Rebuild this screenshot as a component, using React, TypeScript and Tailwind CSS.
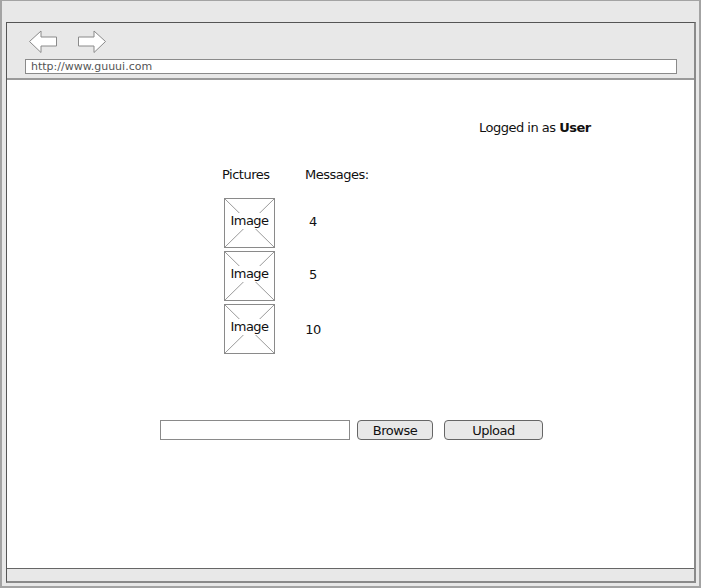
import React from 'react';

function ArrowLeft() {
  return (
    <svg width="30" height="24" viewBox="0 0 30 24" className="block">
      <polygon
        points="1.5,11.5 13,1 13,7 28.5,7 28.5,16 13,16 13,22.5"
        fill="#fff"
        stroke="#8a8a8a"
        strokeWidth="1"
      />
    </svg>
  );
}

function ArrowRight() {
  return (
    <svg width="30" height="24" viewBox="0 0 30 24" className="block">
      <polygon
        points="28.5,11.5 17,1 17,7 1.5,7 1.5,16 17,16 17,22.5"
        fill="#fff"
        stroke="#8a8a8a"
        strokeWidth="1"
      />
    </svg>
  );
}

function ImageBox() {
  return (
    <div className="relative w-[51px] h-[50px] border border-[#8a8a8a] bg-white flex items-center justify-center">
      <svg className="absolute inset-0" width="49" height="48" viewBox="0 0 49 48">
        <line x1="0" y1="0" x2="49" y2="48" stroke="#9a9a9a" strokeWidth="1" />
        <line x1="49" y1="0" x2="0" y2="48" stroke="#9a9a9a" strokeWidth="1" />
      </svg>
      <span className="relative bg-white leading-[16px] px-[1px] -mt-[4px]">Image</span>
    </div>
  );
}

const rows = [4, 5, 10];

export default function App() {
  return (
    <div
      className="w-[701px] h-[588px] bg-[#e8e8e8] border-t border-l-2 border-r-2 border-b-2 border-[#a3a3a3] text-[13px] tracking-[-0.5px] text-[#111]"
      style={{ fontFamily: '"DejaVu Sans", Verdana, sans-serif' }}
    >
      <div className="ml-[4px] mt-[21px] w-[690px] h-[561px] flex flex-col border-t border-l border-[#555] border-r-2 border-b-2 border-r-[#8a8a8a] border-b-[#8a8a8a]">
        {/* toolbar */}
        <div className="h-[57px] border-b-2 border-[#9a9a9a] bg-[#e8e8e8] flex flex-col">
          <div className="flex gap-[19px] pl-[21px] pt-[7px] h-[36px]">
            <ArrowLeft />
            <ArrowRight />
          </div>
          <div className="ml-[18px] w-[652px] h-[15px] bg-white border border-[#8a8a8a] flex items-center pl-[5px] text-[11px] tracking-normal text-[#555] leading-none">
            http://www.guuui.com
          </div>
        </div>

        {/* page */}
        <div className="flex-1 bg-white flex flex-col">
          <div className="pl-[472px] pt-[40px] leading-[16px]">
            Logged in as <span className="font-bold">User</span>
          </div>

          <div className="flex pl-[215px] mt-[31px] leading-[16px]">
            <span className="w-[83px]">Pictures</span>
            <span>Messages:</span>
          </div>

          <div className="flex flex-col gap-[3px] pl-[217px] mt-[15px]">
            {rows.map((n, i) => (
              <div key={i} className="flex items-center">
                <ImageBox />
                <span className={`w-[76px] text-center leading-[16px] ${i === 2 ? 'mt-[2px]' : '-mt-[2px]'}`}>{n}</span>
              </div>
            ))}
          </div>

          <div className="flex items-center pl-[153px] mt-[66px]">
            <div className="w-[190px] h-[20px] border border-[#8a8a8a] bg-white" />
            <button className="ml-[7px] w-[76px] h-[20px] rounded-[4px] border border-[#666] bg-[#e8e8e8] leading-none">
              Browse
            </button>
            <button className="ml-[11px] w-[99px] h-[20px] rounded-[4px] border border-[#666] bg-[#e8e8e8] leading-none">
              Upload
            </button>
          </div>
        </div>

        {/* status bar */}
        <div className="h-[13px] border-t border-[#666] bg-[#e8e8e8]" />
      </div>
    </div>
  );
}
